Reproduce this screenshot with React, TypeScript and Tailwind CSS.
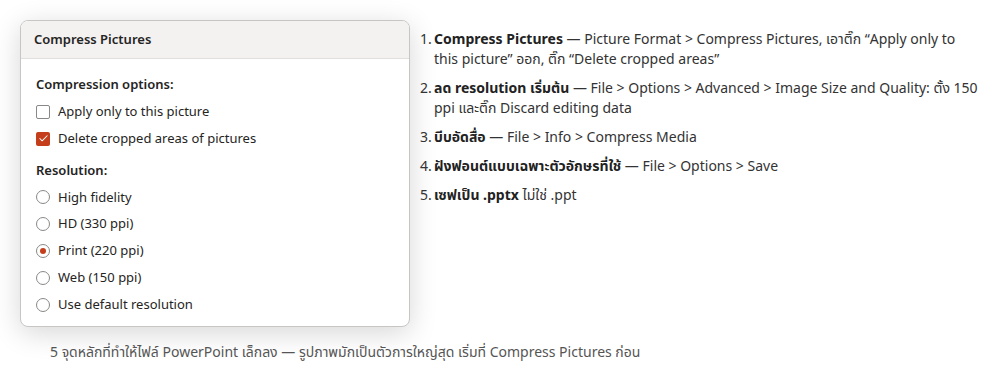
import { Check } from 'lucide-react'

const checks = [
  { label: 'Apply only to this picture', on: false },
  { label: 'Delete cropped areas of pictures', on: true },
]

const radios = [
  { label: 'High fidelity', on: false },
  { label: 'HD (330 ppi)', on: false },
  { label: 'Print (220 ppi)', on: true },
  { label: 'Web (150 ppi)', on: false },
  { label: 'Use default resolution', on: false },
]

const steps = [
  {
    bold: 'Compress Pictures',
    rest: ' — Picture Format > Compress Pictures, เอาติ๊ก “Apply only to this picture” ออก, ติ๊ก “Delete cropped areas”',
  },
  {
    bold: 'ลด resolution เริ่มต้น',
    rest: ' — File > Options > Advanced > Image Size and Quality: ตั้ง 150 ppi และติ๊ก Discard editing data',
  },
  { bold: 'บีบอัดสื่อ', rest: ' — File > Info > Compress Media' },
  { bold: 'ฝังฟอนต์แบบเฉพาะตัวอักษรที่ใช้', rest: ' — File > Options > Save' },
  { bold: 'เซฟเป็น .pptx', rest: ' ไม่ใช่ .ppt' },
]

function Dialog() {
  return (
    <div className="w-[390px] h-[307px] shrink-0 rounded-lg border border-[#c8c6c4] bg-white overflow-hidden shadow-[0_6px_28px_rgba(0,0,0,0.16)] font-['Noto_Sans','Open_Sans',sans-serif] text-[#252423]">
      <div className="h-[38px] bg-[#f3f2f1] border-b border-[#e1dfdd] flex items-center px-[13px] text-[13px] font-semibold">
        Compress Pictures
      </div>
      <div className="px-[15px] pt-[15px] text-[13px]">
        <div className="font-semibold leading-[20px] mb-[4px]">Compression options:</div>
        <div className="flex flex-col">
          {checks.map((c) => (
            <div key={c.label} className="h-[27px] flex items-center gap-[8px]">
              {c.on ? (
                <span className="w-[14px] h-[14px] rounded-[2px] bg-[#c43e1c] flex items-center justify-center">
                  <Check size={11} strokeWidth={2.2} className="text-white" />
                </span>
              ) : (
                <span className="w-[14px] h-[14px] rounded-[2px] border border-[#8a8886] bg-white" />
              )}
              <span>{c.label}</span>
            </div>
          ))}
        </div>
        <div className="font-semibold leading-[20px] mt-[8px] mb-[4px]">Resolution:</div>
        <div className="flex flex-col">
          {radios.map((r) => (
            <div key={r.label} className="h-[26.8px] flex items-center gap-[8px]">
              <span className="w-[14px] h-[14px] rounded-full border border-[#8a8886] bg-white flex items-center justify-center">
                {r.on && <span className="w-[6px] h-[6px] rounded-full bg-[#c43e1c]" />}
              </span>
              <span>{r.label}</span>
            </div>
          ))}
        </div>
      </div>
    </div>
  )
}

export default function App() {
  return (
    <div className="w-[1000px] h-[385px] bg-white overflow-hidden font-['Noto_Sans','Noto_Sans_Thai',sans-serif]">
      <div className="flex gap-[10px] pl-[20px] pt-[20px]">
        <Dialog />
        <ol className="pt-[9px] text-[14px] leading-[20px] text-[#333] flex flex-col gap-[9px] w-[562px]">
          {steps.map((s, i) => (
            <li key={i} className="flex">
              <span className="w-[14px] shrink-0">{i + 1}.</span>
              <span>
                <b className="font-bold text-[#222]">{s.bold}</b>
                {s.rest}
              </span>
            </li>
          ))}
        </ol>
      </div>
      <p className="pl-[50px] pt-[15px] text-[14px] leading-[20px] text-[#555]">
        5 จุดหลักที่ทำให้ไฟล์ PowerPoint เล็กลง — รูปภาพมักเป็นตัวการใหญ่สุด เริ่มที่ Compress Pictures ก่อน
      </p>
    </div>
  )
}
